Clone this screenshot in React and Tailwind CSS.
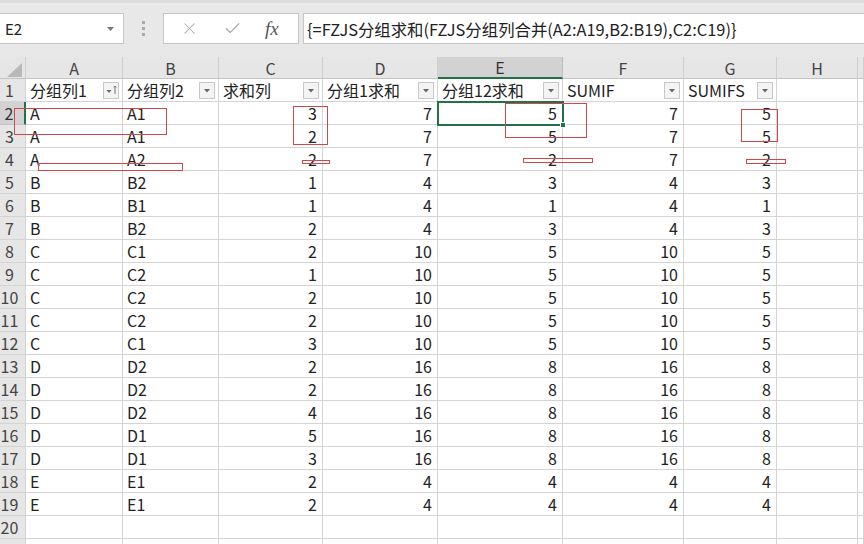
import { X, Check } from "lucide-react"

const cols = ["A", "B", "C", "D", "E", "F", "G", "H", ""]
const headers = ["分组列1", "分组列2", "求和列", "分组1求和", "分组12求和", "SUMIF", "SUMIFS"]

const rows = [
  ["A", "A1", 3, 7, 5, 7, 5],
  ["A", "A1", 2, 7, 5, 7, 5],
  ["A", "A2", 2, 7, 2, 7, 2],
  ["B", "B2", 1, 4, 3, 4, 3],
  ["B", "B1", 1, 4, 1, 4, 1],
  ["B", "B2", 2, 4, 3, 4, 3],
  ["C", "C1", 2, 10, 5, 10, 5],
  ["C", "C2", 1, 10, 5, 10, 5],
  ["C", "C2", 2, 10, 5, 10, 5],
  ["C", "C2", 2, 10, 5, 10, 5],
  ["C", "C1", 3, 10, 5, 10, 5],
  ["D", "D2", 2, 16, 8, 16, 8],
  ["D", "D2", 2, 16, 8, 16, 8],
  ["D", "D2", 4, 16, 8, 16, 8],
  ["D", "D1", 5, 16, 8, 16, 8],
  ["D", "D1", 3, 16, 8, 16, 8],
  ["E", "E1", 2, 4, 4, 4, 4],
  ["E", "E1", 2, 4, 4, 4, 4],
]

// red marker boxes drawn over the sheet
const marks = [
  "left-[14px] top-[108px] w-[153px] h-[27px]",
  "left-[293px] top-[106px] w-[35px] h-[39px]",
  "left-[38px] top-[163px] w-[145px] h-[8px]",
  "left-[302px] top-[160px] w-[28px] h-[4px]",
  "left-[505px] top-[103px] w-[82px] h-[35px]",
  "left-[523px] top-[158px] w-[70px] h-[5px]",
  "left-[741px] top-[109px] w-[37px] h-[33px]",
  "left-[746px] top-[159px] w-[40px] h-[5px]",
]

const grid = "grid grid-cols-[26px_97px_96px_104px_115px_125px_121px_93px_81px_1fr]"

function FilterButton({ sorted }) {
  return (
    <div className="w-[16px] h-[17px] mr-[3px] shrink-0 bg-[#f4f4f4] border border-[#c8c8c8] flex items-center justify-center">
      <svg width="14" height="14" viewBox="0 0 14 14">
        <path d={sorted ? "M2.5 7h5l-2.5 3z" : "M4 6h6l-3 3.5z"} fill="#666" />
        {sorted && <path d="M11 11V3M9.8 4.4L11 3l1.2 1.4" stroke="#666" strokeWidth="0.9" fill="none" />}
      </svg>
    </div>
  )
}

export default function App() {
  return (
    <div
      className="relative w-[864px] h-[544px] overflow-hidden bg-[#e8e8e8] text-[#222] leading-[20px]"
      style={{ fontFamily: '"Noto Sans CJK SC", "Noto Sans", sans-serif' }}
    >
      {/* Formula bar */}
      <div className="h-[57px] flex items-start pt-[10px] border-t-[3px] border-[#dcdcdc]">
        <div className="w-[124px] h-[31px] bg-white border border-l-0 border-[#c6c6c6] flex items-center justify-between pl-[5px] pr-[8px]">
          <span className="text-[15px]">E2</span>
          <svg width="9" height="6" viewBox="0 0 9 6"><path d="M1 1h7L4.5 5z" fill="#777" /></svg>
        </div>
        <div className="w-[39px] h-[31px] flex flex-col items-center justify-center gap-[3px]">
          <span className="w-[3px] h-[3px] bg-[#aaa]" />
          <span className="w-[3px] h-[3px] bg-[#aaa]" />
          <span className="w-[3px] h-[3px] bg-[#aaa]" />
        </div>
        <div className="w-[136px] h-[31px] bg-white border border-[#c6c6c6] flex items-center">
          <X className="ml-[16px] text-[#aaa]" size={19} strokeWidth={1.3} />
          <Check className="ml-[24px] text-[#aaa]" size={19} strokeWidth={1.5} />
          <span
            className="ml-[23px] text-[19px] italic text-[#555]"
            style={{ fontFamily: '"Liberation Serif", serif' }}
          >
            fx
          </span>
        </div>
        <div className="flex-1 h-[31px] ml-[4px] -mr-[4px] bg-white border border-[#c6c6c6] flex items-center pl-[3px]">
          <span className="text-[16.4px] whitespace-nowrap">{"{=FZJS分组求和(FZJS分组列合并(A2:A19,B2:B19),C2:C19)}"}</span>
        </div>
      </div>

      {/* Column letters */}
      <div className={`${grid} h-[22px] bg-[#e6e6e6] border-b border-[#c4c4c4]`}>
        <div className="relative border-r border-[#cfcfcf]">
          <svg className="absolute left-[7px] top-[6px]" width="15" height="14" viewBox="0 0 15 14">
            <path d="M15 0V14H0z" fill="#b8b8b8" />
          </svg>
        </div>
        {cols.map((c, i) => (
          <div
            key={i}
            className={
              c === "E"
                ? "flex items-center justify-center text-[16px] text-[#333] bg-[#d2d2d2] border-r border-[#bdbdbd] border-b-2 border-b-[#217346]"
                : "flex items-center justify-center text-[16px] text-[#444] border-r border-[#cfcfcf]"
            }
          >
            {c}
          </div>
        ))}
      </div>

      {/* Header row 1 */}
      <div className={`${grid} h-[23px]`}>
        <div className="bg-[#e6e6e6] border-r border-[#bdbdbd] border-b border-[#d4d4d4] flex items-center justify-center pr-[6px] text-[16px] text-[#444]">
          1
        </div>
        {headers.map((h, i) => (
          <div key={i} className="bg-white border-r border-b border-[#d4d4d4] flex items-center justify-between pl-[4px] text-[16px] overflow-hidden">
            <span className="whitespace-nowrap">{h}</span>
            <FilterButton sorted={i === 0} />
          </div>
        ))}
        <div className="bg-white border-r border-b border-[#d4d4d4]" />
        <div className="bg-white border-r border-b border-[#d4d4d4]" />
      </div>

      {/* Data rows */}
      {[...rows, null, null, null].map((r, ri) => (
        <div key={ri} className={`${grid} h-[23px]`}>
          <div
            className={
              ri === 0
                ? "bg-[#d2d2d2] border-r-2 border-r-[#217346] border-b border-[#c4c4c4] flex items-center justify-center pr-[6px] text-[16px] text-[#333]"
                : "bg-[#e6e6e6] border-r border-[#bdbdbd] border-b border-[#d4d4d4] flex items-center justify-center pr-[6px] text-[16px] text-[#444]"
            }
          >
            {ri < 19 ? ri + 2 : ""}
          </div>
          {Array.from({ length: 9 }).map((_, ci) => {
            const v = r && ci < 7 ? r[ci] : ""
            const num = typeof v === "number"
            return (
              <div
                key={ci}
                className={`bg-white border-r border-b border-[#d4d4d4] flex items-center text-[16px] ${
                  num ? "justify-end pr-[5px]" : "pl-[4px]"
                }`}
              >
                {v}
              </div>
            )
          })}
        </div>
      ))}

      {/* Active cell E2 */}
      <div className="absolute left-[437px] top-[101px] w-[127px] h-[25px] border-2 border-[#217346]" />
      <div className="absolute left-[560px] top-[122px] w-[6px] h-[6px] bg-[#217346] border border-white" />

      {marks.map((m, i) => (
        <div key={i} className={`absolute ${m} border-[1.5px] border-[#d0484c]`} />
      ))}
    </div>
  )
}
